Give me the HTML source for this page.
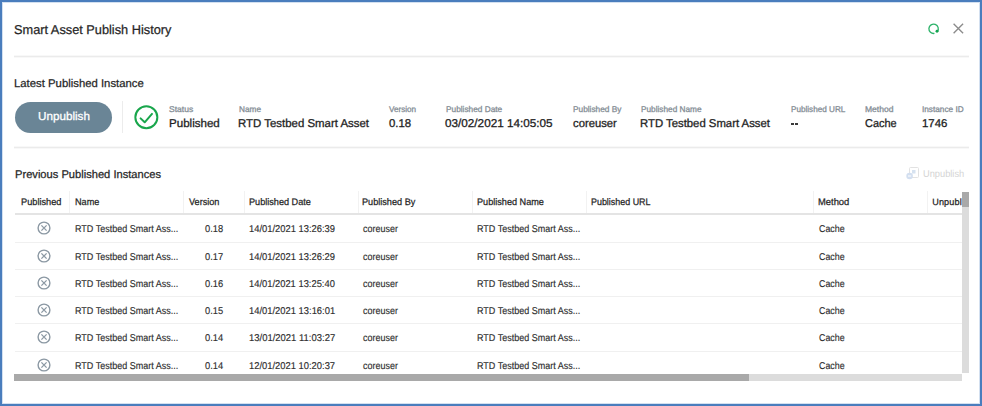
<!DOCTYPE html>
<html><head><meta charset="utf-8">
<style>
*{margin:0;padding:0;box-sizing:border-box}
html,body{width:982px;height:406px;overflow:hidden;background:#fff}
body{position:relative;font-family:"Liberation Sans",sans-serif;color:#222}
.t{position:absolute;white-space:nowrap;text-rendering:geometricPrecision}
.hl{position:absolute;height:1px;background:#ebebeb}
.rb{position:absolute;left:15px;width:947px;height:1px;background:#f0f0f0}
.csep{position:absolute;top:191px;height:22px;width:1px;background:#f2f2f2}
</style></head><body>
<div style="position:absolute;left:0;top:0;width:982px;height:406px;border:2px solid #4a7dbd;box-shadow:inset 0 0 0 1px #d3e0f0"></div>
<svg style="position:absolute;left:926px;top:21px" width="16" height="16" viewBox="0 0 16 16">
  <path d="M8.42 12.43 A4.7 4.7 0 1 1 11.45 10.5" fill="none" stroke="#2db36a" stroke-width="1.35"/>
  <circle cx="11.0" cy="10.3" r="1.45" fill="#13a350"/>
</svg>
<svg style="position:absolute;left:950px;top:20px" width="17" height="17" viewBox="0 0 17 17">
  <path d="M3.6 3.7 L13.1 13.3 M13.1 3.7 L3.6 13.3" stroke="#8c8c8c" stroke-width="1.35" fill="none"/>
</svg>
<div style="position:absolute;left:14px;top:55px;width:955px;height:3px;background:linear-gradient(#f8f8f8 0,#f8f8f8 33%,#ebebeb 33%,#ebebeb 67%,#f8f8f8 67%)"></div>
<div style="position:absolute;left:15px;top:102px;width:97px;height:31px;border-radius:15.5px;background:#6a8596"></div>
<div style="position:absolute;left:122px;top:101px;width:1px;height:32px;background:#ececec"></div>
<svg style="position:absolute;left:133px;top:104px" width="27" height="27" viewBox="0 0 27 27">
  <circle cx="13.35" cy="13.25" r="11.0" fill="none" stroke="#19a64c" stroke-width="2"/>
  <path d="M7.6 14.4 L11.7 18.3 L19.0 9.9" fill="none" stroke="#19a64c" stroke-width="2" stroke-linecap="round" stroke-linejoin="round"/>
</svg>
<div style="position:absolute;left:14px;top:146px;width:955px;height:3px;background:linear-gradient(#f8f8f8 0,#f8f8f8 33%,#ebebeb 33%,#ebebeb 67%,#f8f8f8 67%)"></div>
<svg style="position:absolute;left:904px;top:165px" width="18" height="16" viewBox="0 0 18 16">
  <rect x="5.5" y="2.5" width="9" height="10" rx="1" fill="none" stroke="#e2e2e2" stroke-width="1"/>
  <rect x="8" y="5" width="3.5" height="3.5" fill="#d6e2f0"/>
  <circle cx="5.6" cy="11" r="3.3" fill="#d3dff0"/>
  <path d="M4 11 H7.2" stroke="#fff" stroke-width="1"/>
</svg>
<div class="csep" style="left:69px"></div>
<div class="csep" style="left:183px"></div>
<div class="csep" style="left:243.5px"></div>
<div class="csep" style="left:358px"></div>
<div class="csep" style="left:471.5px"></div>
<div class="csep" style="left:585.5px"></div>
<div class="csep" style="left:813px"></div>
<div class="csep" style="left:927px"></div>
<div style="position:absolute;left:932px;top:190px;width:30px;height:20px;overflow:hidden"><div class="t" style="left:0.2px;top:7.8px;font-size:9.1px;line-height:9.1px;color:#262626;letter-spacing:0.15px;-webkit-text-stroke:0.25px #262626">Unpubl</div></div>
<div style="position:absolute;left:15px;top:213px;width:947px;height:2px;background:#e4e4e4"></div>
<div style="position:absolute;left:962px;top:192px;width:7px;height:181px;background:#dcdcdc"></div>
<div style="position:absolute;left:962px;top:192px;width:7px;height:15px;background:#a9a9a9"></div>
<div style="position:absolute;left:14px;top:374px;width:948px;height:7px;background:#dcdcdc"></div>
<div style="position:absolute;left:14px;top:374px;width:735px;height:7px;background:#a9a9a9"></div>
<div style="position:absolute;left:791px;top:123.2px;width:3.3px;height:1.7px;background:#3a3a3a"></div>
<div style="position:absolute;left:795.2px;top:123.2px;width:3.3px;height:1.7px;background:#3a3a3a"></div>

<svg style="position:absolute;left:36px;top:220.20px" width="16" height="16" viewBox="0 0 16 16"><circle cx="8" cy="8" r="5.9" fill="none" stroke="#8b98a3" stroke-width="1.4"/><path d="M5.4 5.4 L10.6 10.6 M10.6 5.4 L5.4 10.6" stroke="#8b98a3" stroke-width="1.3"/></svg>
<div class="rb" style="top:241.50px"></div>
<svg style="position:absolute;left:36px;top:247.50px" width="16" height="16" viewBox="0 0 16 16"><circle cx="8" cy="8" r="5.9" fill="none" stroke="#8b98a3" stroke-width="1.4"/><path d="M5.4 5.4 L10.6 10.6 M10.6 5.4 L5.4 10.6" stroke="#8b98a3" stroke-width="1.3"/></svg>
<div class="rb" style="top:268.80px"></div>
<svg style="position:absolute;left:36px;top:274.80px" width="16" height="16" viewBox="0 0 16 16"><circle cx="8" cy="8" r="5.9" fill="none" stroke="#8b98a3" stroke-width="1.4"/><path d="M5.4 5.4 L10.6 10.6 M10.6 5.4 L5.4 10.6" stroke="#8b98a3" stroke-width="1.3"/></svg>
<div class="rb" style="top:296.10px"></div>
<svg style="position:absolute;left:36px;top:302.10px" width="16" height="16" viewBox="0 0 16 16"><circle cx="8" cy="8" r="5.9" fill="none" stroke="#8b98a3" stroke-width="1.4"/><path d="M5.4 5.4 L10.6 10.6 M10.6 5.4 L5.4 10.6" stroke="#8b98a3" stroke-width="1.3"/></svg>
<div class="rb" style="top:323.40px"></div>
<svg style="position:absolute;left:36px;top:329.40px" width="16" height="16" viewBox="0 0 16 16"><circle cx="8" cy="8" r="5.9" fill="none" stroke="#8b98a3" stroke-width="1.4"/><path d="M5.4 5.4 L10.6 10.6 M10.6 5.4 L5.4 10.6" stroke="#8b98a3" stroke-width="1.3"/></svg>
<div class="rb" style="top:350.70px"></div>
<svg style="position:absolute;left:36px;top:356.70px" width="16" height="16" viewBox="0 0 16 16"><circle cx="8" cy="8" r="5.9" fill="none" stroke="#8b98a3" stroke-width="1.4"/><path d="M5.4 5.4 L10.6 10.6 M10.6 5.4 L5.4 10.6" stroke="#8b98a3" stroke-width="1.3"/></svg>
<div class="t" id="t0" style="left:13.67px;top:24.46px;font-size:12.8px;line-height:12.8px;color:#262626;transform:scaleX(0.9970);transform-origin:0 0;-webkit-text-stroke:0.25px #262626">Smart Asset Publish History</div>
<div class="t" id="t1" style="left:13.50px;top:78.92px;font-size:11.2px;line-height:11.2px;color:#262626;transform:scaleX(1.0131);transform-origin:0 0;-webkit-text-stroke:0.25px #262626">Latest Published Instance</div>
<div class="t" id="t2" style="left:14.52px;top:170.32px;font-size:11.2px;line-height:11.2px;color:#262626;transform:scaleX(0.9952);transform-origin:0 0;-webkit-text-stroke:0.25px #262626">Previous Published Instances</div>
<div class="t" id="t3" style="left:38.41px;top:111.57px;font-size:11.5px;line-height:11.5px;color:#ffffff;transform:scaleX(1.0145);transform-origin:0 0;-webkit-text-stroke:0.3px #ffffff">Unpublish</div>
<div class="t" id="t4" style="left:168.60px;top:104.57px;font-size:8.3px;line-height:8.3px;color:#858e96;transform:scaleX(1.0273);transform-origin:0 0;-webkit-text-stroke:0.3px #858e96">Status</div>
<div class="t" id="t5" style="left:239.21px;top:104.57px;font-size:8.3px;line-height:8.3px;color:#858e96;transform:scaleX(0.9932);transform-origin:0 0;-webkit-text-stroke:0.3px #858e96">Name</div>
<div class="t" id="t6" style="left:389.44px;top:104.57px;font-size:8.3px;line-height:8.3px;color:#858e96;transform:scaleX(0.9792);transform-origin:0 0;-webkit-text-stroke:0.3px #858e96">Version</div>
<div class="t" id="t7" style="left:445.90px;top:104.57px;font-size:8.3px;line-height:8.3px;color:#858e96;transform:scaleX(0.9987);transform-origin:0 0;-webkit-text-stroke:0.3px #858e96">Published Date</div>
<div class="t" id="t8" style="left:572.70px;top:104.57px;font-size:8.3px;line-height:8.3px;color:#858e96;transform:scaleX(1.0011);transform-origin:0 0;-webkit-text-stroke:0.3px #858e96">Published By</div>
<div class="t" id="t9" style="left:641.48px;top:104.57px;font-size:8.3px;line-height:8.3px;color:#858e96;transform:scaleX(0.9943);transform-origin:0 0;-webkit-text-stroke:0.3px #858e96">Published Name</div>
<div class="t" id="t10" style="left:791.28px;top:104.57px;font-size:8.3px;line-height:8.3px;color:#858e96;transform:scaleX(0.9819);transform-origin:0 0;-webkit-text-stroke:0.3px #858e96">Published URL</div>
<div class="t" id="t11" style="left:865.31px;top:104.57px;font-size:8.3px;line-height:8.3px;color:#858e96;transform:scaleX(1.0268);transform-origin:0 0;-webkit-text-stroke:0.3px #858e96">Method</div>
<div class="t" id="t12" style="left:922.16px;top:104.57px;font-size:8.3px;line-height:8.3px;color:#858e96;transform:scaleX(0.9927);transform-origin:0 0;-webkit-text-stroke:0.3px #858e96">Instance ID</div>
<div class="t" id="t13" style="left:169.13px;top:119.35px;font-size:11.4px;line-height:11.4px;color:#1e1e1e;transform:scaleX(1.0152);transform-origin:0 0;-webkit-text-stroke:0.3px #1e1e1e">Published</div>
<div class="t" id="t14" style="left:238.16px;top:119.35px;font-size:11.4px;line-height:11.4px;color:#1e1e1e;transform:scaleX(1.0032);transform-origin:0 0;-webkit-text-stroke:0.3px #1e1e1e">RTD Testbed Smart Asset</div>
<div class="t" id="t15" style="left:389.00px;top:119.35px;font-size:11.4px;line-height:11.4px;color:#1e1e1e;-webkit-text-stroke:0.3px #1e1e1e">0.18</div>
<div class="t" id="t16" style="left:445.47px;top:119.35px;font-size:11.4px;line-height:11.4px;color:#1e1e1e;transform:scaleX(1.0296);transform-origin:0 0;-webkit-text-stroke:0.3px #1e1e1e">03/02/2021 14:05:05</div>
<div class="t" id="t17" style="left:573.00px;top:119.35px;font-size:11.4px;line-height:11.4px;color:#1e1e1e;transform:scaleX(0.9890);transform-origin:0 0;-webkit-text-stroke:0.3px #1e1e1e">coreuser</div>
<div class="t" id="t18" style="left:640.16px;top:119.35px;font-size:11.4px;line-height:11.4px;color:#1e1e1e;transform:scaleX(0.9948);transform-origin:0 0;-webkit-text-stroke:0.3px #1e1e1e">RTD Testbed Smart Asset</div>
<div class="t" id="t19" style="left:864.55px;top:119.35px;font-size:11.4px;line-height:11.4px;color:#1e1e1e;transform:scaleX(0.9619);transform-origin:0 0;-webkit-text-stroke:0.3px #1e1e1e">Cache</div>
<div class="t" id="t20" style="left:921.58px;top:119.35px;font-size:11.4px;line-height:11.4px;color:#1e1e1e;transform:scaleX(1.0028);transform-origin:0 0;-webkit-text-stroke:0.3px #1e1e1e">1746</div>
<div class="t" id="t21" style="left:923.30px;top:170.13px;font-size:10px;line-height:10px;color:#d4d4d4;transform:scaleX(0.9265);transform-origin:0 0">Unpublish</div>
<div class="t" id="t22" style="left:21.36px;top:197.96px;font-size:9.5px;line-height:9.5px;color:#262626;transform:scaleX(0.9701);transform-origin:0 0;-webkit-text-stroke:0.25px #262626">Published</div>
<div class="t" id="t23" style="left:74.84px;top:197.96px;font-size:9.5px;line-height:9.5px;color:#262626;transform:scaleX(0.9600);transform-origin:0 0;-webkit-text-stroke:0.25px #262626">Name</div>
<div class="t" id="t24" style="left:188.72px;top:197.96px;font-size:9.5px;line-height:9.5px;color:#262626;transform:scaleX(0.9591);transform-origin:0 0;-webkit-text-stroke:0.25px #262626">Version</div>
<div class="t" id="t25" style="left:248.91px;top:197.96px;font-size:9.5px;line-height:9.5px;color:#262626;transform:scaleX(0.9605);transform-origin:0 0;-webkit-text-stroke:0.25px #262626">Published Date</div>
<div class="t" id="t26" style="left:362.39px;top:197.96px;font-size:9.5px;line-height:9.5px;color:#262626;transform:scaleX(0.9608);transform-origin:0 0;-webkit-text-stroke:0.25px #262626">Published By</div>
<div class="t" id="t27" style="left:477.10px;top:197.96px;font-size:9.5px;line-height:9.5px;color:#262626;transform:scaleX(0.9597);transform-origin:0 0;-webkit-text-stroke:0.25px #262626">Published Name</div>
<div class="t" id="t28" style="left:591.25px;top:197.96px;font-size:9.5px;line-height:9.5px;color:#262626;transform:scaleX(0.9389);transform-origin:0 0;-webkit-text-stroke:0.25px #262626">Published URL</div>
<div class="t" id="t29" style="left:817.97px;top:197.96px;font-size:9.5px;line-height:9.5px;color:#262626;transform:scaleX(0.9871);transform-origin:0 0;-webkit-text-stroke:0.25px #262626">Method</div>
<div class="t" id="t30" style="left:75.45px;top:225.22px;font-size:9.9px;line-height:9.9px;color:#2e2e2e;transform:scaleX(0.9112);transform-origin:0 0;-webkit-text-stroke:0.15px #2e2e2e">RTD Testbed Smart Ass...</div>
<div class="t" id="t31" style="left:205.00px;top:225.22px;font-size:9.9px;line-height:9.9px;color:#2e2e2e;transform:scaleX(0.9431);transform-origin:0 0;-webkit-text-stroke:0.15px #2e2e2e">0.18</div>
<div class="t" id="t32" style="left:248.88px;top:225.22px;font-size:9.9px;line-height:9.9px;color:#2e2e2e;transform:scaleX(0.9493);transform-origin:0 0;-webkit-text-stroke:0.15px #2e2e2e">14/01/2021 13:26:39</div>
<div class="t" id="t33" style="left:363.44px;top:225.22px;font-size:9.9px;line-height:9.9px;color:#2e2e2e;transform:scaleX(0.9080);transform-origin:0 0;-webkit-text-stroke:0.15px #2e2e2e">coreuser</div>
<div class="t" id="t34" style="left:477.41px;top:225.22px;font-size:9.9px;line-height:9.9px;color:#2e2e2e;transform:scaleX(0.9111);transform-origin:0 0;-webkit-text-stroke:0.15px #2e2e2e">RTD Testbed Smart Ass...</div>
<div class="t" id="t35" style="left:818.83px;top:225.22px;font-size:9.9px;line-height:9.9px;color:#2e2e2e;transform:scaleX(0.8969);transform-origin:0 0;-webkit-text-stroke:0.15px #2e2e2e">Cache</div>
<div class="t" id="t36" style="left:75.45px;top:252.52px;font-size:9.9px;line-height:9.9px;color:#2e2e2e;transform:scaleX(0.9112);transform-origin:0 0;-webkit-text-stroke:0.15px #2e2e2e">RTD Testbed Smart Ass...</div>
<div class="t" id="t37" style="left:205.00px;top:252.52px;font-size:9.9px;line-height:9.9px;color:#2e2e2e;transform:scaleX(0.9437);transform-origin:0 0;-webkit-text-stroke:0.15px #2e2e2e">0.17</div>
<div class="t" id="t38" style="left:248.88px;top:252.52px;font-size:9.9px;line-height:9.9px;color:#2e2e2e;transform:scaleX(0.9493);transform-origin:0 0;-webkit-text-stroke:0.15px #2e2e2e">14/01/2021 13:26:29</div>
<div class="t" id="t39" style="left:363.44px;top:252.52px;font-size:9.9px;line-height:9.9px;color:#2e2e2e;transform:scaleX(0.9080);transform-origin:0 0;-webkit-text-stroke:0.15px #2e2e2e">coreuser</div>
<div class="t" id="t40" style="left:477.41px;top:252.52px;font-size:9.9px;line-height:9.9px;color:#2e2e2e;transform:scaleX(0.9111);transform-origin:0 0;-webkit-text-stroke:0.15px #2e2e2e">RTD Testbed Smart Ass...</div>
<div class="t" id="t41" style="left:818.83px;top:252.52px;font-size:9.9px;line-height:9.9px;color:#2e2e2e;transform:scaleX(0.8969);transform-origin:0 0;-webkit-text-stroke:0.15px #2e2e2e">Cache</div>
<div class="t" id="t42" style="left:75.45px;top:279.82px;font-size:9.9px;line-height:9.9px;color:#2e2e2e;transform:scaleX(0.9112);transform-origin:0 0;-webkit-text-stroke:0.15px #2e2e2e">RTD Testbed Smart Ass...</div>
<div class="t" id="t43" style="left:205.00px;top:279.82px;font-size:9.9px;line-height:9.9px;color:#2e2e2e;transform:scaleX(0.9431);transform-origin:0 0;-webkit-text-stroke:0.15px #2e2e2e">0.16</div>
<div class="t" id="t44" style="left:248.98px;top:279.82px;font-size:9.9px;line-height:9.9px;color:#2e2e2e;transform:scaleX(0.9475);transform-origin:0 0;-webkit-text-stroke:0.15px #2e2e2e">14/01/2021 13:25:40</div>
<div class="t" id="t45" style="left:363.44px;top:279.82px;font-size:9.9px;line-height:9.9px;color:#2e2e2e;transform:scaleX(0.9080);transform-origin:0 0;-webkit-text-stroke:0.15px #2e2e2e">coreuser</div>
<div class="t" id="t46" style="left:477.41px;top:279.82px;font-size:9.9px;line-height:9.9px;color:#2e2e2e;transform:scaleX(0.9111);transform-origin:0 0;-webkit-text-stroke:0.15px #2e2e2e">RTD Testbed Smart Ass...</div>
<div class="t" id="t47" style="left:818.83px;top:279.82px;font-size:9.9px;line-height:9.9px;color:#2e2e2e;transform:scaleX(0.8969);transform-origin:0 0;-webkit-text-stroke:0.15px #2e2e2e">Cache</div>
<div class="t" id="t48" style="left:75.45px;top:307.12px;font-size:9.9px;line-height:9.9px;color:#2e2e2e;transform:scaleX(0.9112);transform-origin:0 0;-webkit-text-stroke:0.15px #2e2e2e">RTD Testbed Smart Ass...</div>
<div class="t" id="t49" style="left:205.00px;top:307.12px;font-size:9.9px;line-height:9.9px;color:#2e2e2e;transform:scaleX(0.9418);transform-origin:0 0;-webkit-text-stroke:0.15px #2e2e2e">0.15</div>
<div class="t" id="t50" style="left:248.76px;top:307.12px;font-size:9.9px;line-height:9.9px;color:#2e2e2e;transform:scaleX(0.9507);transform-origin:0 0;-webkit-text-stroke:0.15px #2e2e2e">14/01/2021 13:16:01</div>
<div class="t" id="t51" style="left:363.44px;top:307.12px;font-size:9.9px;line-height:9.9px;color:#2e2e2e;transform:scaleX(0.9080);transform-origin:0 0;-webkit-text-stroke:0.15px #2e2e2e">coreuser</div>
<div class="t" id="t52" style="left:477.41px;top:307.12px;font-size:9.9px;line-height:9.9px;color:#2e2e2e;transform:scaleX(0.9111);transform-origin:0 0;-webkit-text-stroke:0.15px #2e2e2e">RTD Testbed Smart Ass...</div>
<div class="t" id="t53" style="left:818.83px;top:307.12px;font-size:9.9px;line-height:9.9px;color:#2e2e2e;transform:scaleX(0.8969);transform-origin:0 0;-webkit-text-stroke:0.15px #2e2e2e">Cache</div>
<div class="t" id="t54" style="left:75.45px;top:334.42px;font-size:9.9px;line-height:9.9px;color:#2e2e2e;transform:scaleX(0.9112);transform-origin:0 0;-webkit-text-stroke:0.15px #2e2e2e">RTD Testbed Smart Ass...</div>
<div class="t" id="t55" style="left:205.00px;top:334.42px;font-size:9.9px;line-height:9.9px;color:#2e2e2e;transform:scaleX(0.9473);transform-origin:0 0;-webkit-text-stroke:0.15px #2e2e2e">0.14</div>
<div class="t" id="t56" style="left:248.81px;top:334.42px;font-size:9.9px;line-height:9.9px;color:#2e2e2e;transform:scaleX(0.9587);transform-origin:0 0;-webkit-text-stroke:0.15px #2e2e2e">13/01/2021 11:03:27</div>
<div class="t" id="t57" style="left:363.44px;top:334.42px;font-size:9.9px;line-height:9.9px;color:#2e2e2e;transform:scaleX(0.9080);transform-origin:0 0;-webkit-text-stroke:0.15px #2e2e2e">coreuser</div>
<div class="t" id="t58" style="left:477.41px;top:334.42px;font-size:9.9px;line-height:9.9px;color:#2e2e2e;transform:scaleX(0.9111);transform-origin:0 0;-webkit-text-stroke:0.15px #2e2e2e">RTD Testbed Smart Ass...</div>
<div class="t" id="t59" style="left:818.83px;top:334.42px;font-size:9.9px;line-height:9.9px;color:#2e2e2e;transform:scaleX(0.8969);transform-origin:0 0;-webkit-text-stroke:0.15px #2e2e2e">Cache</div>
<div class="t" id="t60" style="left:75.45px;top:361.72px;font-size:9.9px;line-height:9.9px;color:#2e2e2e;transform:scaleX(0.9112);transform-origin:0 0;-webkit-text-stroke:0.15px #2e2e2e">RTD Testbed Smart Ass...</div>
<div class="t" id="t61" style="left:205.00px;top:361.72px;font-size:9.9px;line-height:9.9px;color:#2e2e2e;transform:scaleX(0.9473);transform-origin:0 0;-webkit-text-stroke:0.15px #2e2e2e">0.14</div>
<div class="t" id="t62" style="left:248.88px;top:361.72px;font-size:9.9px;line-height:9.9px;color:#2e2e2e;transform:scaleX(0.9501);transform-origin:0 0;-webkit-text-stroke:0.15px #2e2e2e">12/01/2021 10:20:37</div>
<div class="t" id="t63" style="left:363.44px;top:361.72px;font-size:9.9px;line-height:9.9px;color:#2e2e2e;transform:scaleX(0.9080);transform-origin:0 0;-webkit-text-stroke:0.15px #2e2e2e">coreuser</div>
<div class="t" id="t64" style="left:477.41px;top:361.72px;font-size:9.9px;line-height:9.9px;color:#2e2e2e;transform:scaleX(0.9111);transform-origin:0 0;-webkit-text-stroke:0.15px #2e2e2e">RTD Testbed Smart Ass...</div>
<div class="t" id="t65" style="left:818.83px;top:361.72px;font-size:9.9px;line-height:9.9px;color:#2e2e2e;transform:scaleX(0.8969);transform-origin:0 0;-webkit-text-stroke:0.15px #2e2e2e">Cache</div>
</body></html>
